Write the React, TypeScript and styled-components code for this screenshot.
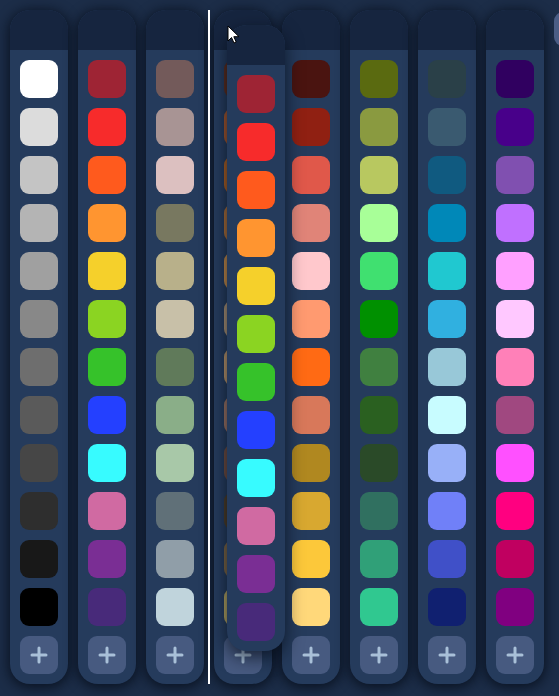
import React from "react";
import styled, { createGlobalStyle } from "styled-components";

const palettes: string[][] = [
  ["#ffffff", "#dcdcdc", "#c4c4c4", "#b4b4b4", "#a0a0a0", "#888888", "#6e6e6e", "#5a5a5a", "#464646", "#2e2e2e", "#181818", "#000000"],
  ["#9e2434", "#f72b2b", "#ff5a1d", "#ff9530", "#f5d02b", "#8bd422", "#36c22a", "#2440ff", "#37fbff", "#d06aa2", "#7a2e94", "#482a7a"],
  ["#735a5a", "#a89494", "#dcc0c0", "#787860", "#b8b08a", "#c8c0a8", "#607a5a", "#8aae88", "#a8c8a8", "#607078", "#909ea8", "#c0d4dc"],
  ["#5a2c1e", "#a0552e", "#a85e24", "#a86c38", "#c08848", "#a89074", "#b8946a", "#9a7262", "#6e4c40", "#4c3c26", "#7a6444", "#b0a060"],
  ["#4a1410", "#902012", "#e0584a", "#e08478", "#ffc8cc", "#ff9a70", "#ff6a14", "#d8785a", "#b08820", "#d8a830", "#fcc83a", "#ffd87a"],
  ["#5a6a10", "#8a9a40", "#b8c860", "#a8ff98", "#40e070", "#009000", "#408040", "#2a6020", "#2a4a28", "#307060", "#30a078", "#30c890"],
  ["#2a4048", "#3a5a70", "#105a80", "#0088b8", "#20c8d0", "#30b0e0", "#98c8d8", "#c8fcff", "#98b0f8", "#7080f8", "#4050c8", "#102070"],
  ["#300060", "#48008a", "#8050b0", "#c070ff", "#ffa0ff", "#ffc8ff", "#ff80b8", "#a04880", "#ff50ff", "#ff0080", "#c00060", "#800080"],
];

const GlobalStyle = createGlobalStyle`
  html, body {
    margin: 0;
    padding: 0;
    background: #1c2d48;
    font-family: "Inter", "Liberation Sans", sans-serif;
    overflow: hidden;
  }
`;

const Board = styled.div`
  position: relative;
  width: 559px;
  height: 696px;
  box-sizing: border-box;
  padding: 10px;
  display: flex;
  align-items: flex-start;
  gap: 10px;
  overflow: hidden;
`;

const Column = styled.div<{ $floating?: boolean }>`
  flex-shrink: 0;
  width: 58px;
  display: flex;
  flex-direction: column;
  background: #253b5c;
  border-radius: 20px;
  overflow: hidden;
  box-shadow: ${(p) =>
    p.$floating
      ? "0 6px 18px rgba(3, 8, 18, 0.7)"
      : "0 2px 12px 2px rgba(6, 12, 24, 0.75)"};
`;

const Header = styled.div`
  height: 40px;
  background: #16253f;
`;

const Body = styled.div`
  display: flex;
  flex-direction: column;
  gap: 10px;
  padding: 10px;
`;

const Swatch = styled.div<{ $color: string }>`
  width: 38px;
  height: 38px;
  border-radius: 9px;
  background: ${(p) => p.$color};
`;

const AddButton = styled.div`
  width: 38px;
  height: 38px;
  border-radius: 9px;
  background: #475a80;
  display: flex;
  align-items: center;
  justify-content: center;
`;

const AddColumn = styled.div`
  flex-shrink: 0;
  margin-top: 2px;
  width: 40px;
  height: 34px;
  border-radius: 9px;
  background: #4b5d85;
`;

const DropLine = styled.div`
  position: absolute;
  left: 208px;
  top: 10px;
  width: 2px;
  height: 674px;
  background: #ffffff;
`;

const Floating = styled.div`
  position: absolute;
  left: 227px;
  top: 25px;
`;

const Cursor = styled.svg`
  position: absolute;
  left: 227px;
  top: 25px;
`;

function Plus() {
  return (
    <svg width="18" height="18" viewBox="0 0 18 18">
      <path d="M9 2v14M2 9h14" stroke="#a9c0d8" strokeWidth="3" strokeLinecap="round" />
    </svg>
  );
}

function PaletteColumn({ colors, floating, withAdd = true }: { colors: string[]; floating?: boolean; withAdd?: boolean }) {
  return (
    <Column $floating={floating}>
      <Header />
      <Body>
        {colors.map((c, i) => (
          <Swatch key={i} $color={c} />
        ))}
        {withAdd && (
          <AddButton>
            <Plus />
          </AddButton>
        )}
      </Body>
    </Column>
  );
}

export default function App() {
  return (
    <>
      <GlobalStyle />
      <Board>
        {palettes.map((p, i) => (
          <PaletteColumn key={i} colors={p} />
        ))}
        <AddColumn />
        <DropLine />
        <Floating>
          <PaletteColumn colors={palettes[1]} floating withAdd={false} />
        </Floating>
        <Cursor width="13" height="20" viewBox="0 0 13 20">
          <path d="M1 1v15l3.5-3.5 2.5 5.5 2.2-1-2.4-5.3H12z" fill="#ffffff" stroke="#000000" strokeWidth="1" strokeLinejoin="round" />
        </Cursor>
      </Board>
    </>
  );
}
